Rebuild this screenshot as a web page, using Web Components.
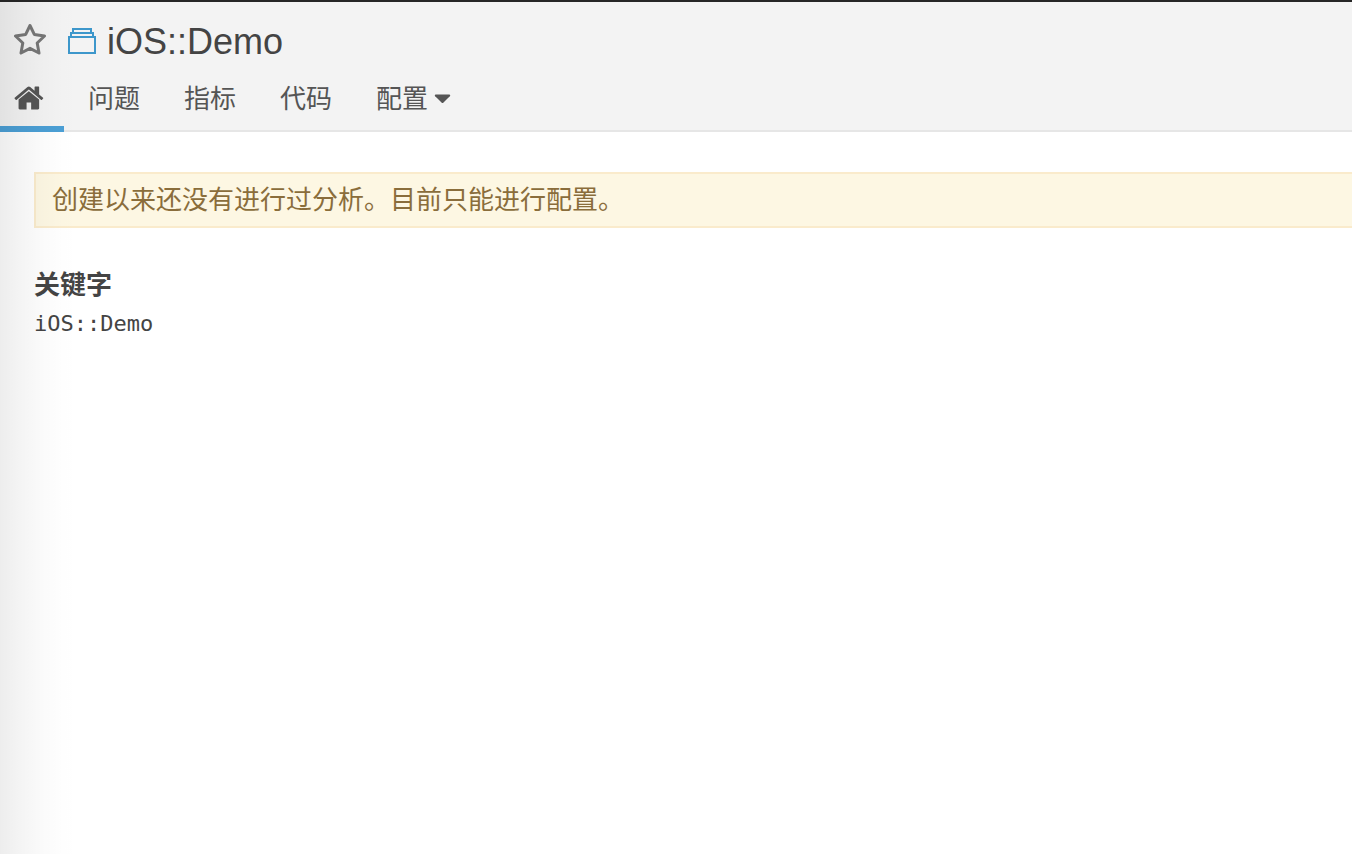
<!DOCTYPE html>
<html lang="zh-CN">
<head>
<meta charset="utf-8">
<meta name="viewport" content="width=device-width, initial-scale=1">
<title>iOS::Demo</title>
<style>
body { margin: 0; background: #fff; color: #444; font-family: "Liberation Sans", "Noto Sans CJK SC", sans-serif; overflow-x: hidden; }
</style>
</head>
<body>
<project-page></project-page>

<template id="project-page">
<style>
:host { display: block; position: relative; min-height: 100vh; }
.shade { position: absolute; top: 0; bottom: 0; left: 0; width: 80px; pointer-events: none;
  background: linear-gradient(to right, rgba(0,0,0,.07), rgba(0,0,0,.045) 25%, rgba(0,0,0,.018) 52%, rgba(0,0,0,.004) 80%, rgba(0,0,0,0)); }
main { padding: 40px 0 40px 34px; }
</style>
<project-header name="iOS::Demo">
  <nav-tab active label="首页"></nav-tab>
  <nav-tab>问题</nav-tab>
  <nav-tab>指标</nav-tab>
  <nav-tab>代码</nav-tab>
  <nav-menu>配置</nav-menu>
</project-header>
<main>
  <alert-box>创建以来还没有进行过分析。目前只能进行配置。</alert-box>
  <project-key><span slot="label">关键字</span>iOS::Demo</project-key>
</main>
<div class="shade"></div>
</template>

<template id="project-header">
<style>
:host { display: block; background: #f3f3f3; border-top: 2px solid #262626; border-bottom: 2px solid #e6e6e6; }
.title { display: flex; align-items: center; height: 66px; padding: 14px 14px 0; box-sizing: border-box; }
button { display: flex; padding: 0; border: 0; background: none; margin-right: 20px; cursor: pointer; }
a { display: flex; align-items: center; gap: 11px; color: inherit; text-decoration: none; }
h1 { margin: 0; font-size: 36px; line-height: 44px; font-weight: 400; }
svg { display: block; }
nav { display: flex; height: 64px; gap: 20px; margin-bottom: -2px; }
</style>
<div class="title">
  <button type="button" aria-label="收藏"><svg width="34" height="36" viewBox="0 2 34 36" fill="none" stroke="#777" stroke-width="3" stroke-linejoin="round"><path d="M16 3.500L20.300 12.400L30.500 14L23.200 21L25 31L16 26.300L7 31L8.800 21L1.500 14L11.700 12.400Z"/></svg></button>
  <a href="#"><svg width="28" height="32" viewBox="0 0 28 32" fill="none" stroke="#3d97cb" stroke-width="2"><path d="M1 11H27V27H1ZM3 10V7H25V10M5 6V3H23V6"/></svg><h1></h1></a>
</div>
<nav><slot></slot></nav>
</template>

<template id="nav-tab">
<style>
:host { display: block; }
a { display: block; box-sizing: border-box; height: 64px; padding: 11px 12px 0; border-bottom: 6px solid transparent; color: #555; font-size: 26px; line-height: 40px; text-decoration: none; white-space: nowrap; }
:host(:not([active])) svg { display: none; }
:host([active]) { margin-right: -8px; }
:host([active]) a { width: 64px; padding: 14px 0 0 14px; border-color: #4b9fd5; }
svg { display: block; }
</style>
<a href="#"><svg width="32" height="32" viewBox="0 0 1792 1792" fill="#555" aria-hidden="true"><path d="M1408 992v480q0 26-19 45t-45 19h-384v-384h-256v384h-384q-26 0-45-19t-19-45v-480q0-1 .5-3t.5-3l575-474 575 474q1 2 1 6zm223-69l-62 74q-8 9-21 11h-3q-13 0-21-7l-692-577-692 577q-12 8-24 7-13-2-21-11l-62-74q-8-10-7-23.500t11-21.500l719-599q32-26 76-26t76 26l244 204v-195q0-14 9-23t23-9h192q14 0 23 9t9 23v408l219 182q10 8 11 21.500t-7 23.500z"/></svg><slot></slot></a>
</template>

<template id="nav-menu">
<style>
:host { display: block; }
button { display: flex; align-items: center; gap: 6px; padding: 11px 12px 0; border: 0; background: none; color: #555; font: inherit; font-size: 26px; line-height: 40px; cursor: pointer; }
</style>
<button type="button" aria-haspopup="true"><slot></slot><svg width="17" height="10" viewBox="0 0 17 10" fill="#555" aria-hidden="true"><path d="M1.500 0.500H15.500Q17 1 15.800 2.200L9.500 8.500Q8.500 9.500 7.500 8.500L1.200 2.200Q0 1 1.500 0.500Z"/></svg></button>
</template>

<template id="alert-box">
<style>
:host { display: block; box-sizing: border-box; padding: 6px 16px; border: 2px solid #faebcc; border-right: 0; background: #fdf7e3; color: #8a6d3b; font-size: 26px; line-height: 40px; }
</style>
<slot></slot>
</template>

<template id="project-key">
<style>
:host { display: block; margin-top: 37px; }
h2 { margin: 0; font-size: 26px; line-height: 40px; font-weight: 700; }
p { margin: 0; font-family: "DejaVu Sans Mono", monospace; font-size: 22px; line-height: 38px; }
</style>
<h2><slot name="label"></slot></h2>
<p><slot></slot></p>
</template>

<script>
class TemplateElement extends HTMLElement {
  constructor() {
    super();
    const template = document.getElementById(this.localName);
    this.attachShadow({ mode: "open" }).append(template.content.cloneNode(true));
  }
}
class NavTab extends TemplateElement {
  connectedCallback() {
    const label = this.getAttribute("label");
    if (label) this.shadowRoot.querySelector("a").setAttribute("aria-label", label);
  }
}
class ProjectHeader extends TemplateElement {
  connectedCallback() {
    this.shadowRoot.querySelector("h1").textContent = this.getAttribute("name");
  }
}
customElements.define("nav-tab", NavTab);
customElements.define("nav-menu", class extends TemplateElement {});
customElements.define("alert-box", class extends TemplateElement {});
customElements.define("project-key", class extends TemplateElement {});
customElements.define("project-header", ProjectHeader);
customElements.define("project-page", class extends TemplateElement {});
</script>
</body>
</html>
